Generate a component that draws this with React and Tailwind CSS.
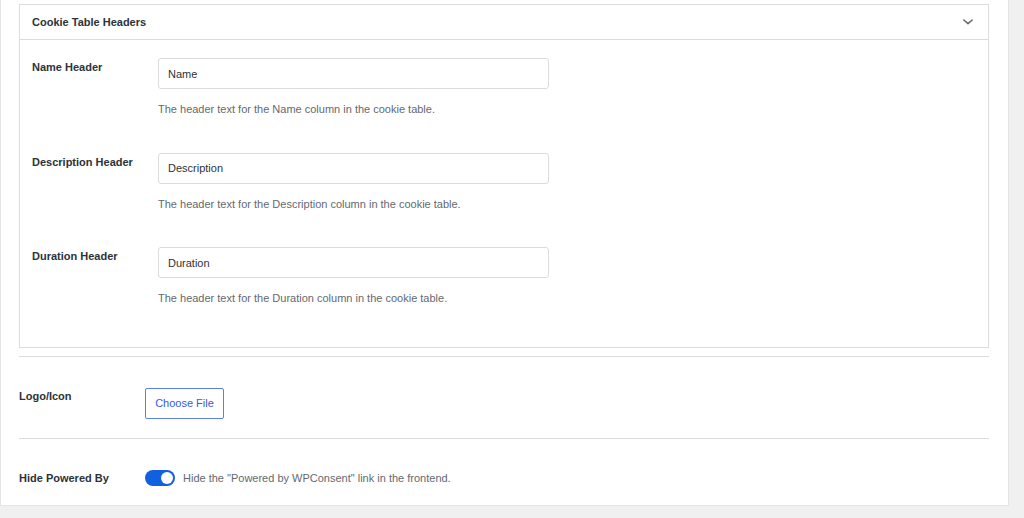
import React, { useState } from 'react';

const rows = [
  { label: 'Name Header', value: 'Name', help: 'The header text for the Name column in the cookie table.' },
  { label: 'Description Header', value: 'Description', help: 'The header text for the Description column in the cookie table.' },
  { label: 'Duration Header', value: 'Duration', help: 'The header text for the Duration column in the cookie table.' },
];

export default function App() {
  const [values, setValues] = useState(rows.map((r) => r.value));
  const [hidePowered, setHidePowered] = useState(true);

  return (
    <div
      className="w-[1024px] h-[518px] overflow-hidden bg-[#f0f0f1] text-[#1d2327]"
      style={{ fontFamily: '"Liberation Sans", Arial, sans-serif' }}
    >
      <div className="w-[1009px] bg-white border-l border-r border-b border-[#e2e4e7] pl-[18px] pr-[19px] pt-[4px]">
        {/* Cookie table headers box */}
        <div className="border border-[#dcdcde]">
          <div className="h-[35px] flex items-center justify-between pl-[12px] pr-[14px] border-b border-[#dcdcde]">
            <h3 className="text-[11px] font-bold leading-[16px] text-[#2c3338]">Cookie Table Headers</h3>
            <svg width="12" height="8" viewBox="0 0 12 8" fill="none" className="text-[#646970]">
              <path d="M1.8 2 L6 5.6 L10.2 2" stroke="currentColor" strokeWidth="1.5" strokeLinecap="round" strokeLinejoin="round" />
            </svg>
          </div>

          <div className="pt-[18px] pb-[41px] pl-[12px] flex flex-col gap-[35.5px]">
            {rows.map((row, i) => (
              <div key={row.label} className="flex items-start">
                <label className="w-[126px] pt-[1px] text-[11px] font-bold leading-[16px] text-[#2c3338]">
                  {row.label}
                </label>
                <div>
                  <input
                    type="text"
                    value={values[i]}
                    onChange={(e) => {
                      const next = [...values];
                      next[i] = e.target.value;
                      setValues(next);
                    }}
                    className="w-[391px] h-[31px] px-[9px] border border-[#dcdcde] rounded-[3px] text-[11px] text-[#2c3338] outline-none bg-white"
                  />
                  <p className="mt-[12px] text-[11px] leading-[16px] text-[#646970]">{row.help}</p>
                </div>
              </div>
            ))}
          </div>
        </div>

        {/* Logo / Icon */}
        <div className="mt-[8px] border-t border-[#dcdcde] pt-[31px] pb-[19px] flex items-start">
          <label className="w-[126px] text-[11px] font-bold leading-[16px] text-[#2c3338]">Logo/Icon</label>
          <button
            type="button"
            className="w-[79px] h-[31px] border border-[#5b7ef0] rounded-[2px] text-[11px] text-[#3858e9] bg-white"
          >
            Choose File
          </button>
        </div>

        {/* Hide powered by */}
        <div className="border-t border-[#dcdcde] pt-[31px] pb-[19px] flex items-center">
          <label className="w-[126px] text-[11px] font-bold leading-[16px] text-[#2c3338]">Hide Powered By</label>
          <button
            type="button"
            onClick={() => setHidePowered(!hidePowered)}
            className={`w-[30px] h-[16px] rounded-full flex items-center px-[2px] ${hidePowered ? 'bg-[#1160e0] justify-end' : 'bg-[#c3c4c7] justify-start'}`}
          >
            <span className="w-[12px] h-[12px] rounded-full bg-white" />
          </button>
          <span className="ml-[8px] text-[11px] leading-[16px] text-[#646970]">
            Hide the "Powered by WPConsent" link in the frontend.
          </span>
        </div>
      </div>
    </div>
  );
}
